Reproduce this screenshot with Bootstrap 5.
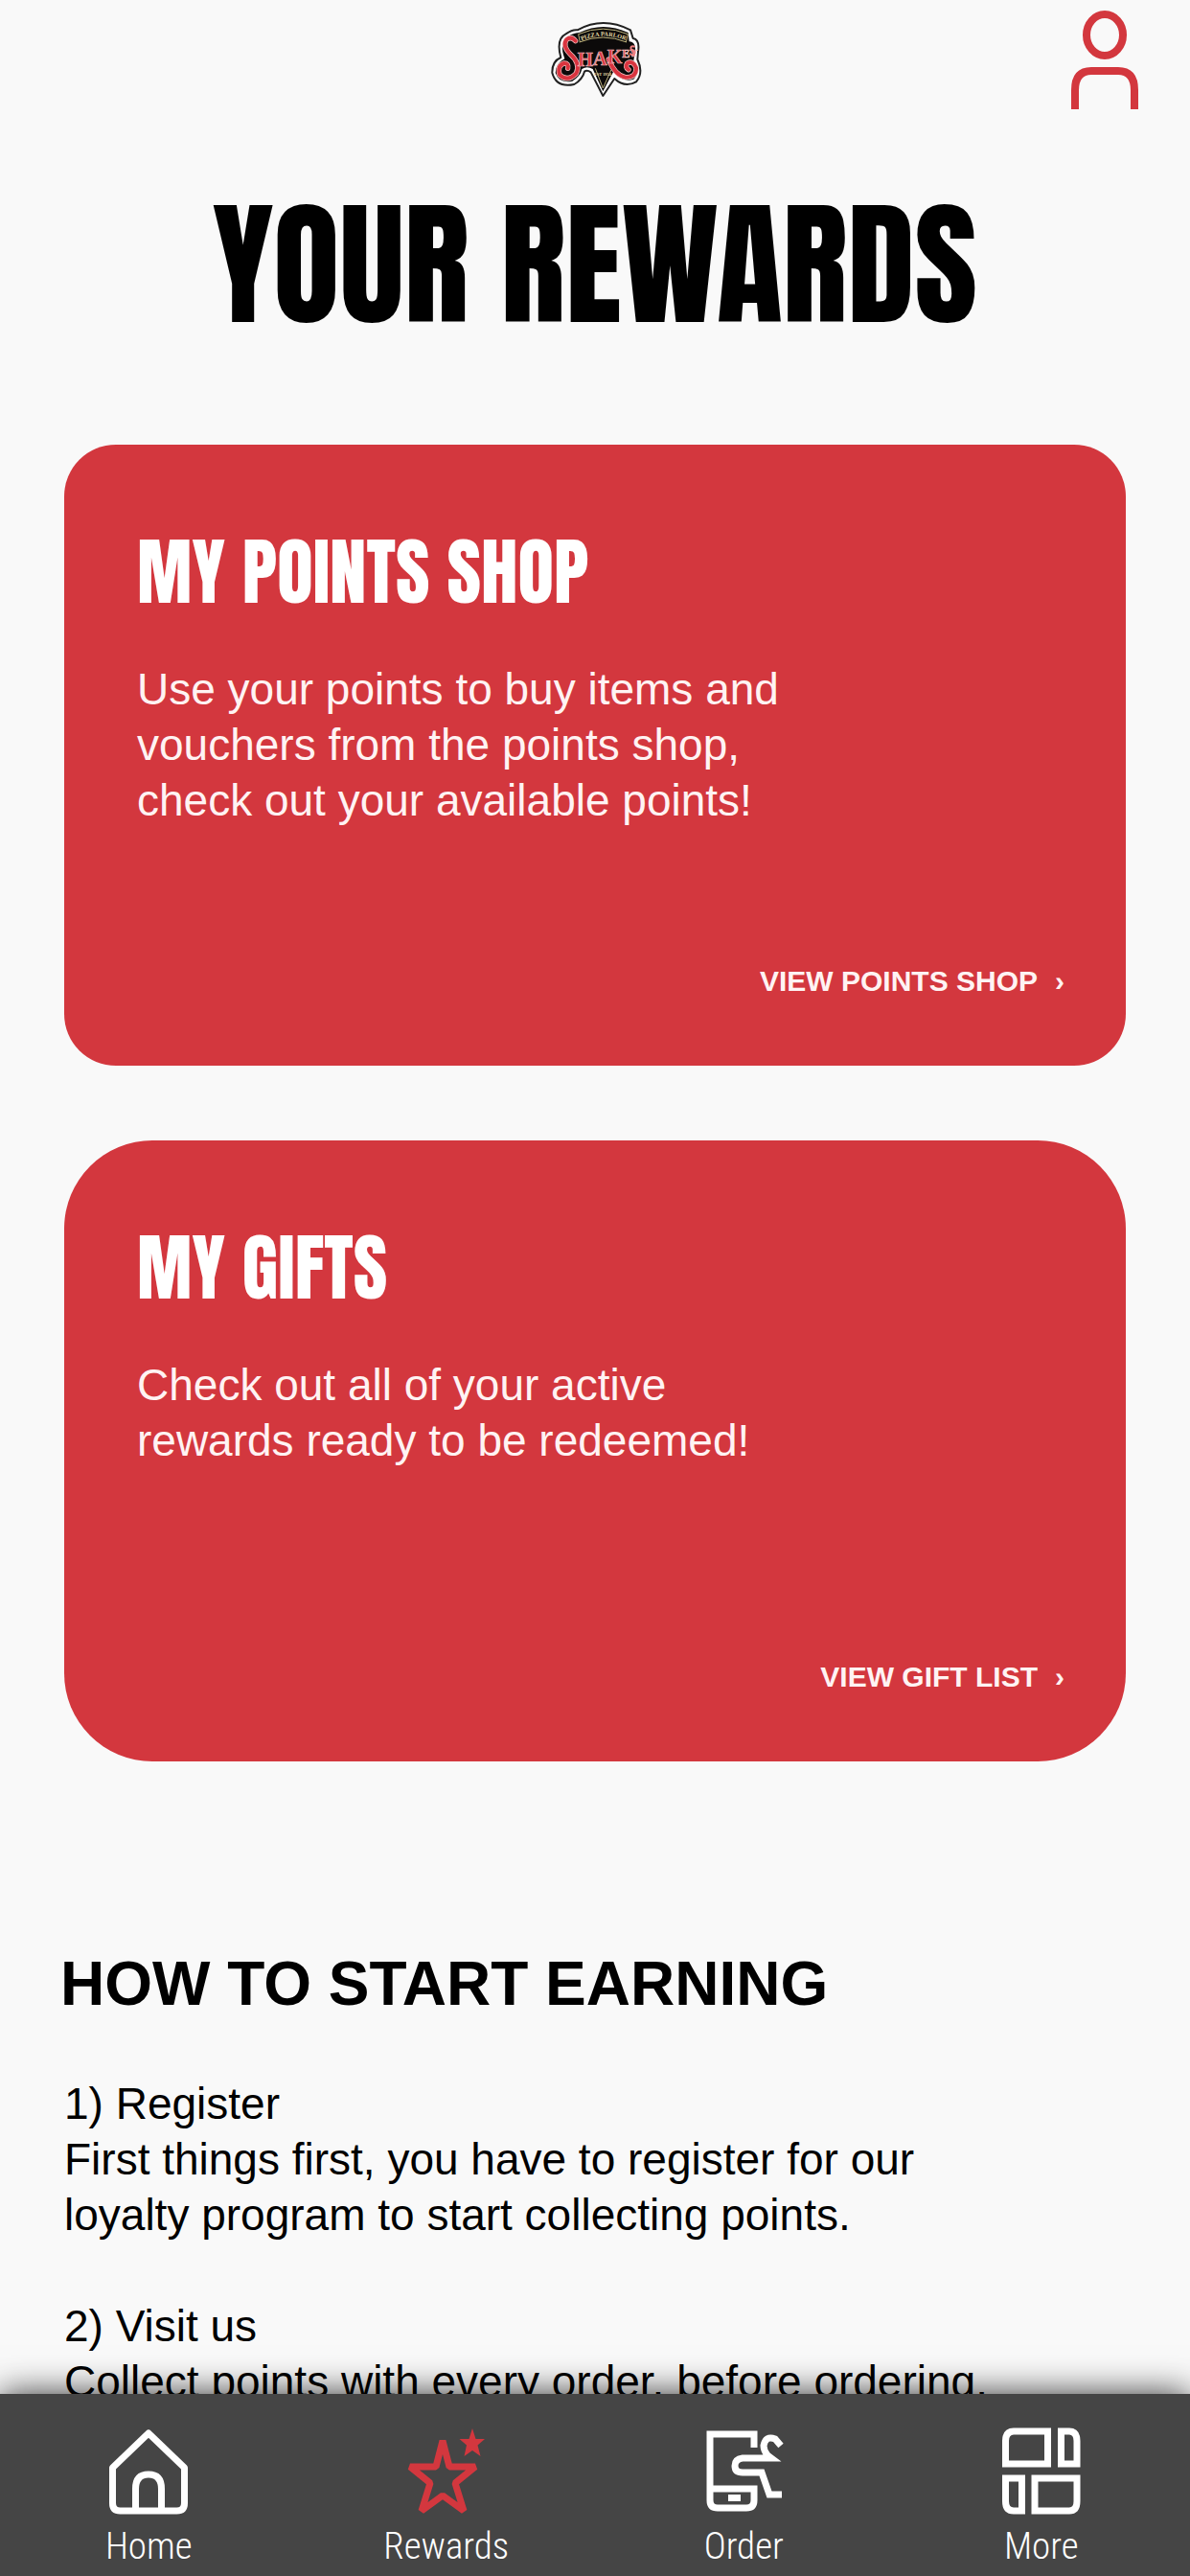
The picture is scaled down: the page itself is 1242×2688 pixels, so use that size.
<!DOCTYPE html>
<html lang="en">
<head>
<meta charset="utf-8">
<meta name="viewport" content="width=device-width, initial-scale=1">
<title>Your Rewards</title>
<link href="https://cdn.jsdelivr.net/npm/bootstrap@5.3.0/dist/css/bootstrap.min.css" rel="stylesheet">
<style>
  :root { --brand: #d3373e; --bar: #454545; }
  body { background: #f9f9f9; color: #000; font-family: "Liberation Sans", Arial, sans-serif; font-size: 46px; line-height: 58px; }
  .display-face { font-family: Anton, "Roboto Condensed", Roboto, sans-serif; font-weight: 400; }
  .scroller { min-height: 0; scrollbar-width: none; }
  .scroller::-webkit-scrollbar { display: none; }
  .topbar { height: 128px; padding: 10px 54px 0; }
  .page-title { font-size: 142px; line-height: 160px; margin: 68px 0 108px; }
  .panels { padding: 0 67px; gap: 78px; }
  .panel { background: var(--brand); color: #fff; border: 0; border-radius: 54px; min-height: 648px; padding: 84px 64px 68px 76px; }
  .panel-round { border-radius: 92px; }
  .panel-title { font-size: 77px; line-height: 96px; margin-bottom: 46px; }
  .panel-text { max-width: 720px; margin: 0; color: #fff3f3; }
  .panel-link { font-size: 30px; line-height: 40px; color: #fff3f3; gap: 18px; }
  .steps { padding: 196px 63px 0; }
  .steps h2 { font-size: 64px; line-height: 72px; margin-bottom: 60px; }
  .steps ol { margin: 0; padding-left: 4px; }
  .steps li { margin-bottom: 58px; }
  .step-text { max-width: 980px; }
  .tabbar { background: var(--bar); height: 190px; box-shadow: 0 0 34px 0 rgba(0,0,0,.8); }
  .tabbar a { color: #fff; font: 300 39px/44px "Roboto Condensed", Roboto, sans-serif; padding-top: 32px; }
  .tabbar svg { margin-bottom: 5px; }
</style>
</head>
<body class="vh-100 d-flex flex-column overflow-hidden">

<div class="scroller flex-grow-1 overflow-auto">
  <header class="topbar row g-0 align-items-start">
    <div class="col"></div>
    <a class="col-auto d-block lh-1 pt-2 mt-1" href="#" aria-label="Shakey's Pizza Parlor">
      <svg class="d-block" width="97" height="81" viewBox="39 36 291 243" font-family="Liberation Serif, serif" font-weight="700">
        <path d="M128 64Q208 20 294 64L302 90Q324 94 318 132L316 156Q336 198 312 226Q276 246 244 216L208 270L170 196Q158 188 150 194Q144 218 118 234Q62 246 49 198Q48 162 76 150Q60 92 92 76Q112 62 128 64Z" fill="#fff" stroke="#222" stroke-width="6" stroke-linejoin="round"/>
        <path d="M134 72Q208 36 287 72L290 100Q314 102 308 138L304 158Q326 196 304 218Q272 230 240 196L208 256L176 186Q158 176 142 186Q138 208 112 224Q70 232 59 198Q60 168 88 154Q70 104 96 86Q112 74 134 72Z" fill="#0c0a0a"/>
        <path d="M136 102L131 77Q208 44 286 77L280 102M134 102Q208 72 282 102M184 184L208 246L234 188" fill="none" stroke="#bdb27c" stroke-width="3"/>
        <path id="arch" d="M141 97Q208 68 280 97" fill="none"/>
        <text font-size="19" fill="#e6dca8"><textPath href="#arch">PIZZA PARLOR</textPath></text>
        <g fill="none" stroke-linecap="round">
          <g stroke="#f3c9c9" stroke-width="16"><path d="M122 98Q108 82 94 94Q80 112 104 138Q140 170 124 200Q98 228 72 204Q64 176 86 168Q102 168 98 184"/><path d="M226 156Q246 206 278 212Q314 212 312 182Q302 158 284 168Q276 180 288 188"/></g>
          <g stroke="#d9343f" stroke-width="12"><path d="M122 98Q108 82 94 94Q80 112 104 138Q140 170 124 200Q98 228 72 204Q64 176 86 168Q102 168 98 184"/><path d="M226 156Q246 206 278 212Q314 212 312 182Q302 158 284 168Q276 180 288 188"/></g>
        </g>
        <text x="128" y="178" fill="#d9343f" stroke="#f3c9c9" stroke-width="2"><tspan font-size="62">H</tspan><tspan font-size="62" dy="-3">A</tspan><tspan font-size="60" dy="-6">K</tspan><tspan font-size="36" dy="-20">E</tspan><tspan font-size="34" dy="-3">Y</tspan></text>
        <path d="M308 116Q292 112 296 124Q312 130 306 140Q296 144 292 136" fill="none" stroke="#f08080" stroke-width="6"/>
        <text x="180" y="208" font-size="13" fill="#e6dca8">EST 1954</text>
      </svg>
    </a>
    <div class="col d-flex justify-content-end">
      <a href="#" aria-label="Account">
        <svg class="d-block" width="70" height="104" viewBox="0 0 70 104" fill="none" stroke="#d3373e" stroke-width="8">
          <ellipse cx="35" cy="26.500" rx="19" ry="21.500"/><path d="M4 104V84Q4 64 21 64H49Q66 64 66 84V104"/>
        </svg>
      </a>
    </div>
  </header>

  <main>
    <h1 class="page-title display-face text-center">YOUR REWARDS</h1>

    <div class="panels d-flex flex-column">
      <section class="panel card">
        <h2 class="panel-title display-face">MY POINTS SHOP</h2>
        <p class="panel-text">Use your points to buy items and vouchers from the points shop, check out your available points!</p>
        <a class="panel-link d-flex align-self-end mt-auto fw-bold text-decoration-none" href="#">VIEW POINTS SHOP <span>›</span></a>
      </section>
      <section class="panel panel-round card">
        <h2 class="panel-title display-face">MY GIFTS</h2>
        <p class="panel-text">Check out all of your active<br>rewards ready to be redeemed!</p>
        <a class="panel-link d-flex align-self-end mt-auto fw-bold text-decoration-none" href="#">VIEW GIFT LIST <span>›</span></a>
      </section>
    </div>

    <section class="steps">
      <h2 class="fw-bold">HOW TO START EARNING</h2>
      <ol class="list-unstyled">
        <li>1) Register<div class="step-text">First things first, you have to register for our loyalty program to start collecting points.</div></li>
        <li>2) Visit us<div class="step-text">Collect points with every order, before ordering.</div></li>
      </ol>
    </section>
  </main>
</div>

<nav class="tabbar row g-0 flex-shrink-0 position-relative z-1" aria-label="Main">
  <a class="col d-flex flex-column align-items-center text-decoration-none" href="#">
    <svg width="92" height="100" viewBox="0 0 92 100" fill="none" stroke="#fff" stroke-width="7" stroke-linejoin="round">
      <path d="M8.500 45L46 9L83.500 45V82Q83.500 90 75.500 90H16.500Q8.500 90 8.500 82Z"/><path d="M32.500 90V67Q32.500 52 46 52Q59.500 52 59.500 67V90"/>
    </svg>Home</a>
  <a class="col d-flex flex-column align-items-center text-decoration-none" href="#" aria-current="page">
    <svg width="92" height="100" viewBox="0 0 92 100">
      <path d="M42 17L49 44H76L55 61L64 90L42 74L20 90L29 61L8 44H35Z" fill="none" stroke="#d3373e" stroke-width="7" stroke-linejoin="bevel"/>
      <path d="M73 4L76.500 15H86L78.500 21.500L81.500 33L73 27L64.500 33L67 21.500L59.500 15H69.500Z" fill="#d3373e"/>
    </svg>Rewards</a>
  <a class="col d-flex flex-column align-items-center text-decoration-none" href="#">
    <svg width="92" height="100" viewBox="0 0 92 100" fill="none" stroke="#fff" stroke-width="7">
      <path d="M57 24V10H11V79Q11 87 19 87H49Q57 87 57 79V67H11"/><path d="M30 76.500H43"/>
      <path d="M85 22L79 15Q69 11 67 22Q67 27 71 32L75 35H45Q37 36 37 43Q37 50 45 50H65L73 73H86"/>
    </svg>Order</a>
  <a class="col d-flex flex-column align-items-center text-decoration-none" href="#">
    <svg width="92" height="100" viewBox="0 0 92 100" fill="none" stroke="#fff" stroke-width="7">
      <path d="M8.500 41V17Q8.500 7 17 7H52.500V41ZM66.500 41V7H75Q83 7 83 17V41ZM8.500 56H25.500V90H17Q8.500 90 8.500 80ZM39 56H83V80Q83 90 75 90H39Z"/>
    </svg>More</a>
</nav>

<script src="https://cdn.jsdelivr.net/npm/bootstrap@5.3.0/dist/js/bootstrap.bundle.min.js"></script>
</body>
</html>
